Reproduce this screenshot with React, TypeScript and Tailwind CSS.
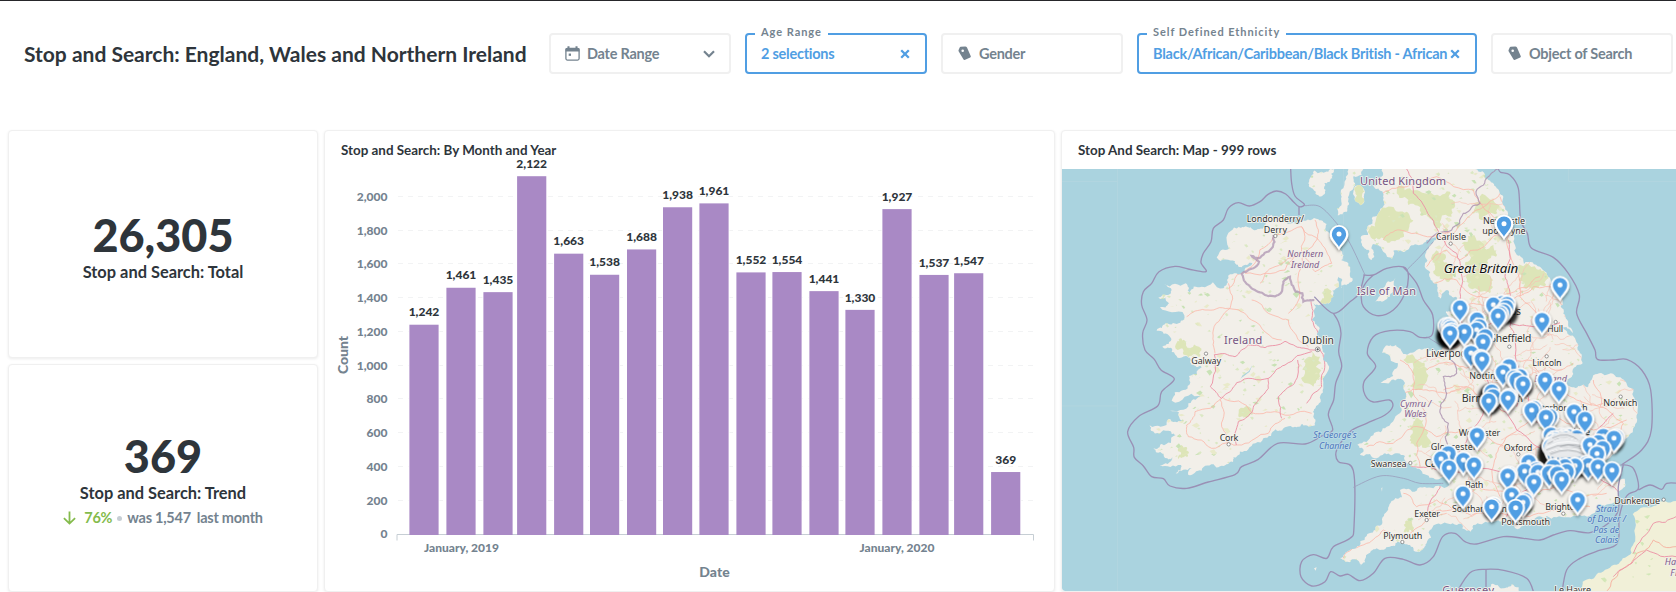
import React from "react";

type Pt = [number, number];

/* ---------- geometry helpers ---------- */

const move = (dx: number, dy: number, pts: Pt[]): Pt[] => pts.map(([x, y]) => [x + dx, y + dy]);
const north = (pts: Pt[]) => move(915, 0, pts);
const south = (pts: Pt[]) => move(915, 690, pts);
const irishSea = (pts: Pt[]) => move(645, 120, pts);
const munster = (pts: Pt[]) => move(0, 690, pts);

function random(seed: number) {
  let s = seed;
  return () => {
    s = (s * 16807) % 2147483647;
    return s / 2147483647;
  };
}

function rough(pts: Pt[], amount: number, seed: number, closed = false): string {
  const rnd = random(seed);
  let line = closed ? [...pts, pts[0]] : pts;
  for (let pass = 0; pass < 3; pass++) {
    const next: Pt[] = [line[0]];
    for (let i = 1; i < line.length; i++) {
      const [x1, y1] = line[i - 1];
      const [x2, y2] = line[i];
      const len = Math.hypot(x2 - x1, y2 - y1);
      if (len > 7) {
        const k = (rnd() - 0.5) * amount;
        next.push([(x1 + x2) / 2 - (y2 - y1) * k, (y1 + y2) / 2 + (x2 - x1) * k]);
      }
      next.push([x2, y2]);
    }
    line = next;
  }
  return "M" + line.map(([x, y]) => `${x.toFixed(1)} ${y.toFixed(1)}`).join("L") + (closed ? "Z" : "");
}

function smooth(pts: Pt[]): string {
  let d = `M${pts[0][0]} ${pts[0][1]}`;
  for (let i = 0; i < pts.length - 1; i++) {
    const p0 = pts[Math.max(0, i - 1)];
    const p1 = pts[i];
    const p2 = pts[i + 1];
    const p3 = pts[Math.min(pts.length - 1, i + 2)];
    d += `C${p1[0] + (p2[0] - p0[0]) / 6} ${p1[1] + (p2[1] - p0[1]) / 6} ${p2[0] - (p3[0] - p1[0]) / 6} ${p2[1] - (p3[1] - p1[1]) / 6} ${p2[0]} ${p2[1]}`;
  }
  return d;
}

/* ---------- land ---------- */

const ireland: Pt[] = [
  [858, 392], [858, 420], [880, 430], [886, 455], [880, 492], [858, 505], [862, 480], [850, 470], [852, 500], [832, 512], [835, 530], [812, 552], [790, 556], [775, 548], [770, 600], [792, 620], [795, 660], [803, 690],
  ...munster([[806, 20], [815, 70], [805, 115], [792, 160], [774, 185], [780, 226], [742, 222], [712, 232], [690, 232], [662, 238], [625, 265], [580, 298], [535, 322], [520, 342], [480, 348], [440, 362], [400, 375], [410, 355], [362, 370], [378, 345], [314, 345], [352, 322], [330, 324], [295, 296], [320, 282], [362, 255], [340, 242], [288, 242], [284, 226], [340, 207], [382, 212], [345, 182], [400, 160], [445, 142], [430, 138], [350, 152], [385, 120], [402, 78], [440, 52], [410, 45], [392, 18], [350, 6]]),
  [352, 690], [322, 680], [346, 652], [305, 632], [332, 610], [376, 608], [388, 586], [315, 562], [342, 550], [310, 532], [348, 520], [328, 492], [392, 490], [402, 518], [440, 500], [505, 505], [516, 480], [556, 462], [592, 430], [560, 442], [540, 424], [485, 412], [522, 386], [515, 360], [552, 320], [580, 322], [604, 330], [632, 310], [650, 285], [690, 282], [700, 312], [740, 300], [790, 298], [815, 312], [825, 350],
];

const britain: Pt[] = [
  ...north([[66, 147], [55, 180], [40, 200], [68, 215], [72, 245], [58, 275], [38, 290], [22, 325], [24, 345], [4, 348], [6, 372], [28, 392], [35, 420], [42, 412], [34, 385], [42, 372], [66, 388], [85, 412], [96, 416], [100, 392], [130, 396], [160, 376], [200, 360], [240, 345], [214, 372], [196, 402], [194, 440], [212, 480], [232, 508], [240, 536], [266, 512], [290, 532], [284, 562], [258, 574], [262, 602], [248, 630], [242, 655]]),
  ...irishSea([[525, 560], [500, 578], [440, 570], [400, 582], [378, 555], [345, 560], [336, 578], [360, 588], [384, 610], [370, 648], [326, 672], [350, 670], [384, 656], [404, 672], [408, 710], [395, 752], [350, 800], [310, 826], [262, 854], [280, 868], [270, 884], [300, 882], [320, 895], [345, 880], [382, 880], [405, 888], [430, 922], [470, 945], [512, 955], [545, 930], [545, 960], [490, 985], [440, 992], [390, 990], [396, 1012], [362, 1028], [342, 1068], [318, 1098], [290, 1128], [258, 1165], [225, 1182], [210, 1194], [226, 1205], [256, 1198], [270, 1220], [288, 1186], [320, 1165], [360, 1160], [382, 1146], [420, 1155], [450, 1175], [470, 1150], [478, 1112], [500, 1092], [548, 1090], [590, 1112]]),
  ...south([[332, 545], [340, 525], [390, 516], [430, 510], [480, 535], [520, 512], [560, 498], [620, 502], [665, 498], [720, 472], [772, 446], [795, 410], [794, 386], [740, 388], [700, 376], [660, 368], [690, 348], [722, 322], [770, 302], [800, 265], [826, 222], [834, 170], [820, 118], [786, 86], [740, 74], [698, 82], [682, 112], [655, 108], [620, 102], [640, 72], [668, 40]]),
  ...north([[660, 700], [645, 655], [612, 628], [566, 616], [610, 622], [638, 640], [622, 600], [602, 560], [600, 530], [572, 480], [540, 440], [492, 432], [470, 404], [462, 350], [440, 290], [430, 230], [408, 200], [376, 176], [345, 147]]),
];

const isleOfMan = north([[106, 474], [84, 484], [68, 505], [46, 545], [66, 545], [90, 530], [104, 500]]);
const islay: Pt[] = [[768, 170], [800, 155], [838, 147], [832, 175], [808, 190], [812, 210], [790, 226], [778, 212], [760, 190]];
const kintyre: Pt[] = [[880, 147], [925, 147], [920, 165], [896, 168], [892, 210], [880, 240], [876, 275], [848, 286], [846, 265], [860, 250], [858, 210], [872, 180]];
const arran: Pt[] = [[898, 202], [916, 196], [930, 215], [928, 245], [916, 256], [900, 242], [894, 222]];
const france = south([[960, 442], [900, 455], [842, 474], [818, 492], [826, 560], [812, 612], [770, 644], [715, 668], [668, 695], [650, 730], [960, 740]]);
const cherbourg = south([[396, 740], [394, 702], [428, 715], [455, 703], [476, 712], [474, 740]]);

const land = [
  rough(ireland, 0.55, 11, true), rough(britain, 0.5, 23, true), rough(isleOfMan, 0.4, 3, true), rough(islay, 0.7, 5, true),
  rough(kintyre, 0.5, 7, true), rough(arran, 0.3, 9, true), rough(cherbourg, 0.4, 17, true),
].join(" ");

/* ---------- vegetation ---------- */

function speckles(count: number, seed: number, size: number): string {
  const rnd = random(seed);
  let d = "";
  for (let i = 0; i < count; i++) {
    const x = 300 + rnd() * 1500;
    const y = 150 + rnd() * 1240;
    const s = size * (0.4 + rnd());
    d += `M${x.toFixed(0)} ${y.toFixed(0)}l${s.toFixed(1)} ${(-s * rnd()).toFixed(1)} ${(s * 0.6).toFixed(1)} ${(s * rnd()).toFixed(1)} ${(-s * 0.7).toFixed(1)} ${(s * rnd()).toFixed(1)}z`;
  }
  return d;
}

const moors: Pt[][] = [
  north([[110, 220], [150, 205], [210, 215], [270, 215], [285, 245], [275, 290], [240, 330], [215, 300], [180, 285], [145, 255]]),
  north([[50, 290], [95, 260], [140, 275], [160, 300], [130, 335], [110, 360], [70, 355], [30, 345]]),
  north([[305, 370], [350, 362], [400, 375], [408, 410], [380, 440], [400, 480], [390, 520], [345, 505], [320, 465], [330, 420]]),
  north([[215, 410], [250, 400], [270, 430], [270, 480], [245, 478], [225, 450]]),
  north([[340, 250], [400, 240], [412, 280], [370, 300], [335, 280]]),
  north([[475, 455], [530, 448], [565, 470], [550, 498], [490, 500]]),
  irishSea([[400, 600], [450, 605], [470, 640], [450, 690], [410, 680]]),
  irishSea([[430, 790], [460, 780], [480, 840], [440, 860], [420, 830]]),
  irishSea([[405, 1085], [430, 1082], [432, 1115], [405, 1118]]),
  irishSea([[110, 595], [150, 590], [150, 650], [130, 680], [105, 640]]),
  [[365, 668], [390, 662], [432, 680], [430, 710], [390, 705], [368, 690]],
  [[800, 520], [830, 515], [828, 545], [795, 545]],
  [[898, 202], [916, 196], [930, 215], [928, 245], [916, 256], [900, 242]],
  munster([[368, 300], [396, 292], [398, 320], [370, 328]]),
  munster([[550, 195], [590, 185], [580, 200], [552, 202]]),
];

/* ---------- roads ---------- */

const motorways: Pt[][] = [
  [[478, 704], [540, 710], [580, 675], [630, 683], [690, 664], [740, 684], [790, 690]],
  [[478, 704], [466, 800], [500, 835], [545, 788], [640, 775], [690, 735], [770, 695]],
  munster([[590, 188], [610, 150], [640, 115], [640, 85]]),
  munster([[728, 30], [718, 100], [670, 140], [680, 205]]),
  munster([[544, 285], [550, 215], [590, 188]]),
  munster([[795, 0], [808, 60], [800, 110], [755, 160]]),
  [[768, 545], [770, 600], [790, 660]],
  north([[140, 147], [160, 220], [210, 290], [240, 350], [290, 400], [305, 450], [300, 540], [310, 640], [360, 740]]),
  north([[445, 360], [435, 470], [450, 520], [450, 620], [480, 760], [470, 860]]),
  north([[270, 640], [350, 620], [440, 600], [520, 620], [600, 608]]),
  south([[360, 50], [390, 150], [360, 210], [300, 300], [270, 370], [230, 430], [200, 500]]),
  south([[390, 150], [470, 240], [560, 300], [640, 300]]),
  south([[270, 370], [400, 360], [600, 360], [700, 380], [780, 430]]),
  south([[480, 90], [510, 200], [600, 300]]),
  south([[440, 500], [500, 420], [600, 370]]),
  south([[90, 350], [150, 350], [230, 360]]),
  south([[640, 300], [700, 260], [760, 190]]),
  south([[948, 620], [860, 600], [800, 650], [760, 680]]),
  south([[948, 500], [880, 520], [820, 610]]),
];

const trunkRoads: Pt[][] = [
  [[520, 505], [590, 440], [655, 350], [740, 320], [790, 360], [830, 430]],
  [[615, 490], [660, 440], [740, 400], [780, 455], [830, 430]],
  [[395, 590], [450, 570], [520, 565], [590, 600], [680, 660]],
  [[590, 540], [640, 580], [700, 600], [760, 680]],
  [[520, 490], [525, 565], [475, 630], [480, 700]],
  [[740, 320], [738, 400], [690, 450], [570, 460]],
  [[780, 300], [785, 360], [740, 440], [700, 580]],
  munster([[500, 145], [420, 185], [395, 225], [400, 260], [470, 295], [560, 285], [640, 250], [690, 205]]),
  munster([[495, 148], [500, 230], [520, 285]]),
  munster([[500, 140], [590, 188], [680, 192], [770, 190]]),
  north([[70, 360], [120, 330], [215, 350], [280, 340], [350, 270], [420, 220]]),
  north([[60, 230], [140, 200], [230, 170], [340, 210], [430, 310]]),
  north([[200, 440], [260, 390], [300, 420], [440, 330]]),
  north([[220, 490], [290, 480], [350, 530], [440, 540], [520, 500], [590, 510]]),
  north([[420, 230], [450, 320], [455, 420], [480, 530], [540, 600]]),
  north([[300, 560], [380, 560], [450, 520], [540, 470]]),
  irishSea([[390, 600], [430, 640], [430, 700], [470, 760], [440, 850], [450, 920]]),
  irishSea([[400, 700], [460, 690], [530, 700], [590, 680]]),
  irishSea([[290, 860], [370, 850], [430, 800], [500, 830], [590, 820]]),
  irishSea([[220, 1195], [290, 1150], [340, 1110], [400, 1130], [470, 1080], [530, 1060]]),
  irishSea([[400, 1000], [440, 1040], [500, 1020], [590, 1060]]),
  south([[200, 500], [280, 480], [390, 490], [480, 500], [590, 480], [690, 470]]),
  south([[310, 430], [400, 420], [480, 440], [620, 420], [740, 430]]),
  south([[520, 50], [560, 120], [650, 150], [730, 160], [820, 150]]),
  south([[700, 90], [720, 170], [790, 220], [760, 290]]),
  south([[400, 60], [500, 30], [600, 60], [640, 40]]),
  south([[450, 150], [540, 160], [620, 220], [700, 240], [800, 210]]),
  south([[300, 250], [380, 260], [470, 300], [560, 280]]),
  south([[250, 120], [320, 110], [390, 150]]),
  south([[200, 60], [280, 40], [360, 50]]),
  south([[420, 440], [400, 350], [430, 280], [540, 200]]),
];

const localRoads: Pt[][] = (() => {
  const rnd = random(77);
  const list: Pt[][] = [];
  for (let i = 0; i < 120; i++) {
    const x = 1160 + rnd() * 560;
    const y = 180 + rnd() * 1010;
    const a = rnd() * 6.28;
    const b = a + (rnd() - 0.5) * 1.6;
    list.push([[x, y], [x + 50 * Math.cos(a), y + 50 * Math.sin(a)], [x + 50 * Math.cos(a) + 55 * Math.cos(b), y + 50 * Math.sin(a) + 55 * Math.sin(b)]]);
  }
  return list;
})();

/* ---------- boundaries ---------- */

const waters: Pt[][] = [
  [[707, 147], [710, 190], [720, 228], [748, 253], [732, 260], [715, 245], [692, 222], [664, 213], [638, 224], [615, 245], [583, 258], [550, 248], [520, 265], [505, 300], [475, 325], [468, 365], [445, 400], [438, 428], [453, 455], [400, 447], [360, 439], [312, 455], [290, 490], [265, 515], [260, 555], [276, 600], [263, 640], [270, 690], [298, 718], [318, 750], [358, 777],
    ...munster([[320, 125], [308, 168], [250, 200], [218, 245], [236, 292], [238, 322], [265, 348], [290, 380], [325, 386], [345, 408], [395, 415], [460, 396], [540, 374], [560, 350], [610, 328], [668, 280], [750, 282], [800, 258], [833, 240], [820, 193], [836, 150], [842, 100], [860, 50], [851, 5]]), [858, 640], [850, 605], [835, 580]],
  [[732, 260], [732, 285]],
  [[778, 530], [835, 580], [885, 545], [912, 520], [928, 465]],
  irishSea([[280, 345], [310, 345], [350, 325], [400, 321], [415, 345], [405, 400], [370, 450], [320, 467], [280, 440], [275, 395], [290, 365], [310, 345]]),
  irishSea([[400, 321], [440, 370], [460, 420], [488, 465], [486, 525], [450, 532], [420, 515], [360, 512], [310, 530], [292, 580], [317, 620], [282, 665], [285, 705], [310, 726], [358, 720], [368, 740], [345, 765], [290, 790], [240, 815], [200, 870], [205, 905], [250, 932], [252, 1100], [240, 1135], [190, 1160], [170, 1195], [130, 1184], [95, 1205], [93, 1250], [125, 1278], [165, 1265], [182, 1235], [210, 1248], [235, 1243], [270, 1262], [310, 1240], [345, 1195], [400, 1198], [450, 1215], [490, 1190], [518, 1130], [555, 1120], [585, 1145], [620, 1152], [700, 1130], [760, 1135], [810, 1140], [850, 1125], [900, 1112], [960, 1118], [1015, 1090], [1045, 1050], [1045, 980], [1060, 915]]),
  north([[415, 147], [422, 157], [450, 165], [475, 205], [482, 300], [502, 340], [515, 385], [580, 412], [625, 460], [658, 525], [650, 580], [680, 640], [705, 690], [712, 718], [760, 720], [800, 718], [845, 750], [872, 810], [874, 930], [845, 990], [785, 1034]]),
  south([[785, 344], [820, 355], [835, 415], [800, 438], [778, 500], [772, 580], [715, 602], [660, 625], [620, 660], [605, 735]]),
  south([[835, 420], [870, 405], [905, 418], [920, 400], [960, 400]]),
  south([[288, 730], [330, 668], [378, 658], [435, 662], [500, 685], [522, 730]]),
  south([[378, 660], [378, 712]]),
];

const thinWaters: Pt[][] = [
  irishSea([[105, 137], [150, 140], [200, 190], [240, 250], [285, 345]]),
  irishSea([[410, 330], [450, 290], [490, 245]]),
  irishSea([[250, 982], [330, 948], [400, 955], [450, 970], [520, 970]]),
  irishSea([[470, 530], [510, 555]]),
  south([[790, 344], [740, 352]]),
];

const borders: Pt[][] = [
  [[655, 345], [650, 385], [610, 415], [590, 408], [612, 425], [595, 445], [560, 462], [590, 505], [630, 525], [670, 525], [685, 485], [705, 470], [722, 515], [742, 520], [745, 545], [778, 540]],
  north([[200, 370], [275, 330], [310, 280], [330, 270], [360, 250], [348, 215], [385, 170], [415, 147]]),
  irishSea([[540, 600], [560, 640], [520, 650], [530, 700], [510, 750], [535, 790], [540, 870], [525, 910]]),
];

/* ---------- labels ---------- */

type Kind = "city" | "country" | "region" | "sea" | "nation";
type Label = [string, number, number, number, number, Kind];

const labels: Label[] = [
  ["United Kingdom", 915, 195, 258, 33, "country"],
  ["Carlisle", 1143, 360, 90, 27, "city"],
  ["Newcastle", 1284, 311, 126, 27, "city"],
  ["upon Tyne", 1282, 342, 130, 27, "city"],
  ["Great Britain", 1166, 458, 224, 40, "nation"],
  ["Isle of Man", 905, 525, 178, 33, "country"],
  ["Leeds", 1318, 584, 80, 31, "city"],
  ["Hull", 1476, 635, 48, 27, "city"],
  ["Sheffield", 1306, 667, 123, 31, "city"],
  ["Liverpool", 1113, 712, 130, 31, "city"],
  ["Lincoln", 1432, 739, 88, 27, "city"],
  ["Nottingham", 1243, 776, 152, 27, "city"],
  ["England", 1438, 785, 98, 27, "region"],
  ["Birmingham", 1220, 847, 185, 32, "city"],
  ["Norwich", 1645, 859, 102, 27, "city"],
  ["Peterborough", 1430, 872, 168, 27, "city"],
  ["Cymru /", 1035, 861, 94, 27, "region"],
  ["Wales", 1048, 892, 66, 27, "region"],
  ["Worcester", 1211, 947, 125, 27, "city"],
  ["Cambridge", 1480, 945, 125, 27, "city"],
  ["Gloucester", 1127, 991, 138, 27, "city"],
  ["Oxford", 1346, 992, 86, 27, "city"],
  ["Swansea", 947, 1040, 108, 27, "city"],
  ["Cardiff", 1109, 1042, 96, 31, "city"],
  ["Bath", 1230, 1103, 55, 27, "city"],
  ["Southampton", 1191, 1176, 165, 27, "city"],
  ["Exeter", 1078, 1190, 77, 27, "city"],
  ["Brighton", 1471, 1171, 105, 27, "city"],
  ["Portsmouth", 1339, 1214, 146, 27, "city"],
  ["Plymouth", 985, 1256, 117, 27, "city"],
  ["Dunkerque", 1678, 1151, 137, 27, "city"],
  ["Strait", 1623, 1176, 63, 27, "sea"],
  ["of Dover /", 1597, 1207, 116, 27, "sea"],
  ["Pas de", 1615, 1239, 78, 27, "sea"],
  ["Calais", 1620, 1270, 70, 27, "sea"],
  ["Guernsey", 1162, 1423, 155, 33, "country"],
  ["Le Havre", 1498, 1418, 110, 27, "city"],
  ["Hauts-de-", 1829, 1336, 120, 27, "region"],
  ["France", 1846, 1367, 84, 27, "region"],
  ["Londonderry/", 575, 306, 172, 27, "city"],
  ["Derry", 626, 338, 70, 27, "city"],
  ["Northern", 697, 411, 108, 27, "region"],
  ["Ireland", 708, 443, 85, 27, "region"],
  ["Ireland", 507, 671, 115, 33, "country"],
  ["Dublin", 740, 671, 97, 31, "city"],
  ["Galway", 409, 733, 89, 27, "city"],
  ["Cork", 494, 964, 56, 27, "city"],
  ["St George's", 775, 955, 130, 27, "sea"],
  ["Channel", 792, 987, 96, 27, "sea"],
];

const labelClass: Record<Kind, string> = {
  city: "fill-[#333333] stroke-[#f5f3ee]",
  country: "fill-[#765482] stroke-[#f5f3ee]",
  region: "fill-[#7f5b8c] stroke-[#f2efe9] italic",
  sea: "fill-[#4d76bd] stroke-[#bcdbe6] italic",
  nation: "fill-[#111111] stroke-[#f5f3ee] italic",
};

const towns: Pt[] = [[661, 348], [453, 701], [521, 973], [1187, 371], [1502, 606], [1363, 680], [1475, 709], [1697, 830], [1066, 1029], [1390, 1003], [1115, 1200], [1042, 1266], [1525, 1181], [1826, 1139]];

/* ---------- pins ---------- */

const capital: Pt[] = (() => {
  const rnd = random(41);
  const list: Pt[] = [];
  for (let i = 0; i < 60; i++) {
    const a = rnd() * 6.28;
    const r = Math.sqrt(rnd());
    list.push([1535 + Math.cos(a) * r * 56, 985 + Math.sin(a) * r * 38]);
  }
  return list;
})();

const pins: Pt[] = [
  [852, 343],
  ...north([[432, 312], [600, 496], [546, 601], [300, 564], [351, 600], [400, 555], [427, 550], [441, 553], [438, 563], [430, 575], [420, 582], [414, 588], [260, 618], [268, 619], [272, 625], [358, 620], [350, 630], [313, 635], [274, 634], [270, 640], [376, 650], [369, 665], [333, 700]]),
  ...south([[362, 24], [366, 28], [447, 50], [429, 67], [480, 80], [463, 84], [470, 90], [489, 102], [555, 90], [597, 117], [395, 126], [399, 140], [386, 153], [448, 141], [444, 145], [522, 176], [515, 181], [570, 200], [562, 199], [558, 202], [642, 186], [675, 208], [351, 256], [265, 311], [243, 327], [267, 354], [310, 331], [342, 345], [573, 255], [730, 259], [768, 262], [762, 265], [690, 285], [715, 278], [728, 296], [711, 312], [506, 337], [447, 374], [443, 378], [494, 364], [522, 396], [530, 360], [534, 367], [568, 370], [580, 352], [615, 350], [592, 372], [620, 365], [605, 388], [645, 348], [680, 342], [685, 347], [714, 351], [756, 361], [455, 435], [309, 432], [653, 450], [400, 467], [395, 471], [495, 452], [489, 458], [467, 474]]),
].sort((a, b) => a[1] - b[1]) as Pt[];

function Pin({ at }: { at: Pt }) {
  return (
    <g transform={`translate(${at[0]} ${at[1]})`}>
      <path d="M0 48C-6 34-28 20-28 0A28 28 0 0 1 28 0C28 20 6 34 0 48Z" fill="#fff" filter="url(#pinShadow)" />
      <path d="M0 38C-5 27-21.500 15-21.500-1A21.500 21.500 0 0 1 21.500-1C21.500 15 5 27 0 38Z" fill="#509ee3" />
      <circle r="7.500" cy="-1" fill="#fff" />
    </g>
  );
}

function Lines({ list, amount, seed }: { list: Pt[][]; amount: number; seed: number }) {
  return <path d={list.map((p, i) => rough(p, amount, seed + i)).join(" ")} />;
}

function StopMap() {
  return (
    <svg className="block h-[422px] w-[615px] rounded-bl-[3px]" viewBox="21 147 1845 1266" preserveAspectRatio="xMinYMin slice">
      <defs>
        <clipPath id="land"><path d={land} /></clipPath>
        <clipPath id="france"><path d={rough(france, 0.3, 31, true)} /></clipPath>
        <filter id="pinShadow" x="-60%" y="-60%" width="220%" height="220%">
          <feDropShadow dx="0" dy="5" stdDeviation="5" floodColor="#000" floodOpacity="0.5" />
        </filter>
        <filter id="soft" x="-50%" y="-50%" width="200%" height="200%"><feGaussianBlur stdDeviation="5" /></filter>
      </defs>
      <rect x="0" y="100" width="1900" height="1340" fill="#aad3df" />
      <path d="M187 147V1413M21 184H187M21 858H187M865 147V900M1541 147V184H1866" fill="none" stroke="#b7d8e0" strokeWidth="2" />
      <path d={land} fill="#f2efe9" />
      <g clipPath="url(#land)">
        <path d={moors.map((p, i) => rough(p, 0.8, 50 + i, true)).join(" ")} fill="#dde5b8" />
        <path d={speckles(420, 91, 9)} fill="#c9e2b6" />
        <path d={speckles(1000, 19, 6)} fill="#dbe8c4" />
        <path d={speckles(420, 64, 11)} fill="#e6e8c2" opacity="0.8" />
        <g fill="none" stroke="#f8c3b5" strokeWidth="2"><Lines list={localRoads} amount={0.3} seed={300} /></g>
        <g fill="none" stroke="#fbb5a6" strokeWidth="2.300"><Lines list={trunkRoads} amount={0.25} seed={100} /></g>
        <g fill="none" stroke="#ec92a6" strokeWidth="2.800"><Lines list={motorways} amount={0.2} seed={200} /></g>
      </g>
      <path d={rough(france, 0.3, 31, true)} fill="#f1f0d8" />
      <g clipPath="url(#france)" fill="none">
        <path d={speckles(900, 29, 9)} fill="#d3e7b8" />
        <path d={rough(south([[948, 590], [880, 570], [830, 610], [780, 660], [740, 723]]), 0.3, 8)} stroke="#f5a999" strokeWidth="2.500" />
        <g stroke="#ec92a6" strokeWidth="2.800"><Lines list={motorways.slice(-2)} amount={0.2} seed={217} /></g>
      </g>
      <path d="M1724 1305l-6-22 12 14zM592 735l-8 20-26 20-10 16 14-24 20-14z" fill="#aad3df" />
      <path d="M777 1345l8-3-3 10zM981 1115l-2-10 3-3z" fill="#f2efe9" />
      <path d={waters.map(smooth).join(" ")} fill="none" stroke="#9a90b5" strokeWidth="4" />
      <path d={thinWaters.map(smooth).join(" ")} fill="none" stroke="#9a9fbd" strokeWidth="2.500" />
      <g fill="none" stroke="#a98fae" strokeWidth="6.500" opacity="0.7"><Lines list={borders.slice(0, 1)} amount={0.3} seed={400} /></g>
      <g fill="none" stroke="#a98fae" strokeWidth="3.500" opacity="0.8"><Lines list={borders.slice(1)} amount={0.3} seed={410} /></g>
      <g fill="#fff" stroke="#666" strokeWidth="2">
        {towns.map(([x, y]) => <circle key={x} cx={x} cy={y} r="5" />)}
        <circle cx="788" cy="688" r="7" />
        <circle cx="788" cy="688" r="2.500" fill="#444" />
      </g>
      <g className="font-['Noto_Sans',sans-serif] font-normal" strokeWidth="5" strokeLinejoin="round">
        {labels.map(([text, x, y, w, size, kind]) => (
          <text key={text + y} x={x} y={y} fontSize={size} textLength={w} paintOrder="stroke" className={labelClass[kind]}>{text}</text>
        ))}
      </g>
      <g fill="#000" filter="url(#soft)">
        <ellipse cx="1183" cy="648" rx="39" ry="40" />
        <ellipse cx="1362" cy="578" rx="27" ry="36" opacity="0.8" />
        <ellipse cx="1275" cy="640" rx="36" ry="30" opacity="0.7" />
        <ellipse cx="1305" cy="838" rx="37" ry="46" opacity="0.8" />
        <ellipse cx="1404" cy="800" rx="30" ry="32" opacity="0.8" />
        <ellipse cx="1540" cy="1005" rx="92" ry="72" opacity="0.9" />
        <ellipse cx="1680" cy="970" rx="26" ry="26" opacity="0.5" />
        <ellipse cx="1400" cy="1158" rx="32" ry="28" opacity="0.7" />
        <ellipse cx="1312" cy="1172" rx="28" ry="28" opacity="0.6" />
        <ellipse cx="1186" cy="1030" rx="34" ry="26" opacity="0.4" />
      </g>
      {pins.filter((p) => p[1] < 960).map((p, i) => <Pin key={i} at={p} />)}
      {capital.slice().sort((a, b) => a[1] - b[1]).map((p, i) => <Pin key={i} at={p} />)}
      <g>
        <path d="M1466 985C1472 940 1535 926 1575 945L1625 985C1625 1012 1570 1012 1530 1012 1500 1014 1460 1012 1466 985Z" fill="#e8eaec" />
        <path d="M1478 972q56-40 116 4M1474 990q64-34 140 8M1486 1003q54-26 104 2M1492 954q48-24 84 12M1515 980q40-16 96 8M1484 998q50-28 128-2" fill="none" stroke="#777b80" strokeWidth="1.500" />
        <path d="M1474 983q64-38 136 4M1494 964q50-24 96 10M1482 996q64-26 126 6" fill="none" stroke="#fff" strokeWidth="3" />
      </g>
      {pins.filter((p) => p[1] >= 960).map((p, i) => <Pin key={i} at={p} />)}
    </svg>
  );
}

/* ---------- bar chart ---------- */

const months: [number, number][] = [
  [409, 1242], [446, 1461], [483, 1435], [516.700, 2122], [553.700, 1663], [589.600, 1538], [626.600, 1688], [662.600, 1938], [699, 1961],
  [736, 1552], [772, 1554], [809, 1441], [845, 1330], [882, 1927], [919, 1537], [953.700, 1547], [990.700, 369],
];
const baseline = 534.3;
const scaleY = (v: number) => baseline - v * 0.16875;
const ticks = [0, 200, 400, 600, 800, 1000, 1200, 1400, 1600, 1800, 2000];

function MonthChart() {
  return (
    <svg className="block h-[433px] w-[729px] overflow-visible font-['Lato',sans-serif]" viewBox="325 158 729 433">
      {ticks.slice(1).map((t) => (
        <line key={t} x1="398" x2="1034" y1={Math.round(scaleY(t)) - 0.5} y2={Math.round(scaleY(t)) - 0.5} stroke="#f2f3f4" strokeDasharray="5 5" />
      ))}
      {months.map(([x, v]) => <rect key={x} x={x - 0.5} y={scaleY(v) - 1} width="31" height={baseline - scaleY(v) + 1} fill="#fff" />)}
      <path d="M397 540.500V534.500H1033.500V540.500" fill="none" stroke="#c6ced4" />
      {months.map(([x, v]) => <rect key={x} x={x + 0.4} y={scaleY(v)} width="29.200" height={baseline - scaleY(v) + 0.7} fill="#a989c5" />)}
      <g fill="#2e353b" fontSize="12" fontWeight="900" textAnchor="middle">
        {months.map(([x, v]) => <text key={x} x={x + 15} y={scaleY(v) - 8.3}>{v.toLocaleString("en-US")}</text>)}
      </g>
      <g fill="#74838f" fontSize="12" fontWeight="900" textAnchor="end">
        {ticks.map((t) => <text key={t} x="387.500" y={scaleY(t) + 4}>{t.toLocaleString("en-US")}</text>)}
      </g>
      <g fill="#74838f" fontSize="12" fontWeight="900" textAnchor="middle">
        <text x="461.500" y="552">January, 2019</text>
        <text x="897" y="552">January, 2020</text>
        <text x="714.500" y="577" fontSize="14">Date</text>
        <text transform="translate(348 355) rotate(-90)" fontSize="14">Count</text>
      </g>
    </svg>
  );
}

/* ---------- filters ---------- */

function TagIcon() {
  return (
    <svg className="h-[15px] w-[14px] shrink-0" viewBox="0 0 14 15" fill="#74838f">
      <path fillRule="evenodd" d="M2.600.800 7.200.500Q8.400.500 9 1.600L12.800 10.200Q13 11 12.200 11.400L6.600 13.900Q5.800 14.100 5.400 13.300L.600 5.200Q.300 4.400.700 3.700L1.700 1.500Q2 .900 2.600.800ZM4.700 3.400A1.300 1.300 0 1 0 4.700 6 1.300 1.300 0 0 0 4.700 3.400Z" />
    </svg>
  );
}

function CloseIcon() {
  return (
    <svg className="h-[10px] w-[10px] shrink-0" viewBox="0 0 10 10" fill="none" stroke="#509ee3" strokeWidth="2.300">
      <path d="M1.200 1.200 8.800 8.800M8.800 1.200 1.200 8.800" />
    </svg>
  );
}

function EmptyFilter({ label }: { label: string }) {
  return (
    <div className="flex h-[41px] w-[182px] shrink-0 items-center gap-[7px] rounded-[4px] border-2 border-[#f0f0f0] pl-[15px] text-[14.5px] tracking-[-0.25px] text-[#74838f]">
      <TagIcon />
      <span>{label}</span>
    </div>
  );
}

function ActiveFilter({ label, value, wide }: { label: string; value: string; wide?: boolean }) {
  return (
    <div className={`relative flex h-[41px] shrink-0 items-center justify-between rounded-[4px] border-2 border-[#509ee3] pl-[14px] text-[14.5px] tracking-[-0.25px] text-[#509ee3] ${wide ? "w-[340px] pr-[15px]" : "w-[182px] pr-[15px]"}`}>
      <span className="absolute -top-[10px] left-[8px] bg-white px-[6px] text-[11px] leading-[14px] tracking-[0.95px] text-[#74838f]">{label}</span>
      <span className="whitespace-nowrap">{value}</span>
      <CloseIcon />
    </div>
  );
}

const card = "rounded-[4px] border border-[#f0f0f0] bg-white shadow-[0_1px_3px_rgba(0,0,0,0.08)]";

export default function App() {
  return (
    <div className="flex h-[592px] w-[1676px] flex-col overflow-hidden border-t border-[#26262a] bg-white font-['Lato',sans-serif] font-bold">
      <header className="flex h-[129px] shrink-0 items-start pl-6 pt-[32px]">
        <h1 className="mr-[22px] flex h-[41px] w-[503px] shrink-0 items-center whitespace-nowrap text-[21px] text-[#2e353b]">Stop and Search: England, Wales and Northern Ireland</h1>
        <div className="flex gap-[14px]">
          <div className="flex h-[41px] w-[182px] shrink-0 items-center rounded-[4px] border-2 border-[#f0f0f0] pl-[14px] pr-[14px] text-[14.5px] tracking-[-0.25px] text-[#74838f]">
            <svg className="mr-[7px] h-[15px] w-[15px]" viewBox="0 0 15 15" fill="none" stroke="#74838f">
              <rect x=".900" y="2.300" width="13.200" height="11.800" rx="1.500" strokeWidth="1.300" />
              <path d="M.600 4H14.400" strokeWidth="3" />
              <path d="M3.500.300V2M11.500.300V2" strokeWidth="2" />
              <path d="M3.700 8.700H6" strokeWidth="2.300" />
            </svg>
            <span>Date Range</span>
            <svg className="ml-auto h-[8px] w-[12px]" viewBox="0 0 12 8" fill="none" stroke="#74838f" strokeWidth="2.200">
              <path d="M1 1.300 6 6.200 11 1.300" />
            </svg>
          </div>
          <ActiveFilter label="Age Range" value="2 selections" />
          <EmptyFilter label="Gender" />
          <ActiveFilter label="Self Defined Ethnicity" value="Black/African/Caribbean/Black British - African" wide />
          <EmptyFilter label="Object of Search" />
        </div>
      </header>
      <main className="flex h-[462px] shrink-0 gap-[6px] pl-2">
        <div className="flex w-[310px] shrink-0 flex-col gap-[6px]">
          <section className={`${card} flex h-[228px] flex-col items-center pt-[76px]`}>
            <div className="text-[45px] font-black leading-[56px] text-[#2e353b]">26,305</div>
            <div className="text-[16.4px] leading-[18px] text-[#2e353b]">Stop and Search: Total</div>
          </section>
          <section className={`${card} flex h-[228px] flex-col items-center pt-[63px]`}>
            <div className="text-[45px] font-black leading-[56px] text-[#2e353b]">369</div>
            <div className="text-[16.4px] leading-[18px] text-[#2e353b]">Stop and Search: Trend</div>
            <div className="mt-[7px] flex items-center text-[14.5px] leading-[18px] tracking-[-0.25px] text-[#74838f]">
              <svg className="mr-[8px] h-[14px] w-[13px]" viewBox="0 0 13 14" fill="none" stroke="#84bb4c" strokeWidth="1.800">
                <path d="M6.500.500V12.500M.900 7.200 6.500 12.600 12.100 7.200" />
              </svg>
              <span className="text-[#84bb4c]">76%</span>
              <span className="mx-[5px] h-[5px] w-[5px] rounded-full bg-[#c6ced4]" />
              <span className="mr-[6px]">was 1,547</span>
              <span>last month</span>
            </div>
          </section>
        </div>
        <section className={`${card} w-[731px] shrink-0`}>
          <h2 className="h-[27px] pl-[16px] pt-[11px] text-[13.4px] leading-[16px] text-[#2e353b]">Stop and Search: By Month and Year</h2>
          <MonthChart />
        </section>
        <section className={`${card} w-[640px] shrink-0 overflow-hidden`}>
          <h2 className="h-[38px] pl-[16px] pt-[11px] text-[13.4px] leading-[16px] text-[#2e353b]">Stop And Search: Map - 999 rows</h2>
          <StopMap />
        </section>
      </main>
    </div>
  );
}
